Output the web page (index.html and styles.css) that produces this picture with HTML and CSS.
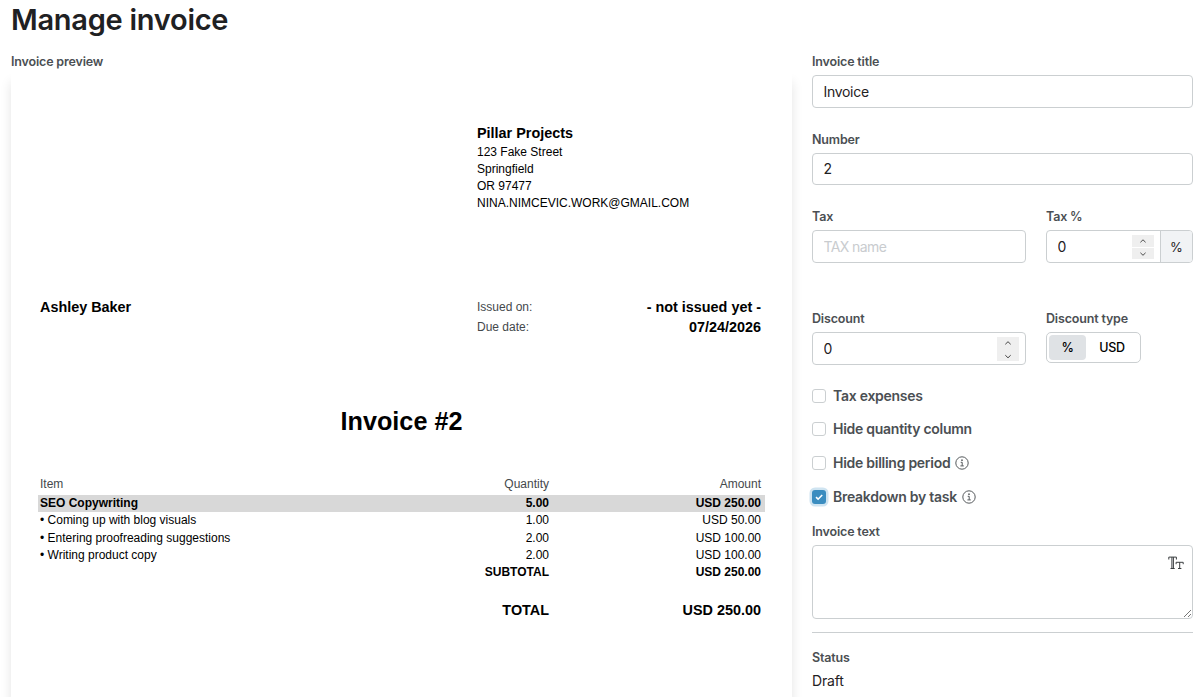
FILE: index.html
```html
<!DOCTYPE html>
<html lang="en">
<head>
<meta charset="utf-8">
<title>Manage invoice</title>
<link rel="stylesheet" href="styles.css">
</head>
<body>
<h1 class="page-title">Manage invoice</h1>
<main class="layout">
  <section class="preview">
    <div class="label">Invoice preview</div>
    <div class="sheet">
      <div class="sender">
        <div class="strong">Pillar Projects</div>
        <div>123 Fake Street</div>
        <div>Springfield</div>
        <div>OR 97477</div>
        <div class="mail">NINA.NIMCEVIC.WORK@GMAIL.COM</div>
      </div>
      <div class="parties">
        <div class="strong client">Ashley Baker</div>
        <dl class="dates">
          <dt>Issued on:</dt><dd>- not issued yet -</dd>
          <dt>Due date:</dt><dd>07/24/2026</dd>
        </dl>
      </div>
      <h2 class="invoice-heading">Invoice #2</h2>
      <div class="items">
        <div class="row head"><span>Item</span><span>Quantity</span><span>Amount</span></div>
        <div class="row group"><span>SEO Copywriting</span><span>5.00</span><span>USD 250.00</span></div>
        <div class="row first"><span>• Coming up with blog visuals</span><span>1.00</span><span>USD 50.00</span></div>
        <div class="row"><span>• Entering proofreading suggestions</span><span>2.00</span><span>USD 100.00</span></div>
        <div class="row"><span>• Writing product copy</span><span>2.00</span><span>USD 100.00</span></div>
        <div class="row subtotal"><span></span><span>SUBTOTAL</span><span>USD 250.00</span></div>
        <div class="row total"><span></span><span>TOTAL</span><span>USD 250.00</span></div>
      </div>
    </div>
  </section>

  <form class="settings">
    <div class="field title-field">
      <label class="label" for="title">Invoice title</label>
      <div class="control"><input id="title" class="input" type="text" value="Invoice"></div>
    </div>
    <div class="field number-field">
      <label class="label" for="number">Number</label>
      <div class="control"><input id="number" class="input" type="text" value="2"></div>
    </div>
    <div class="pair tax-pair">
      <div class="field">
        <label class="label" for="tax">Tax</label>
        <div class="control"><input id="tax" class="input" type="text" placeholder="TAX name"></div>
      </div>
      <div class="field">
        <label class="label" for="taxp">Tax %</label>
        <div class="control">
          <input id="taxp" class="input" type="text" value="0">
          <span class="spinner split">
            <svg viewBox="0 0 22 12"><path d="M8.3 7.6 11 5l2.7 2.6"/></svg>
            <svg viewBox="0 0 22 12"><path d="M8.3 5 11 7.6 13.7 5"/></svg>
          </span>
          <span class="addon">%</span>
        </div>
      </div>
    </div>
    <div class="pair discount-pair">
      <div class="field">
        <label class="label" for="discount">Discount</label>
        <div class="control">
          <input id="discount" class="input" type="text" value="0">
          <span class="spinner">
            <svg viewBox="0 0 22 12"><path d="M8.3 7.3 11 4.7l2.7 2.6"/></svg>
            <svg viewBox="0 0 22 12"><path d="M8.3 6.2 11 8.8l2.7-2.6"/></svg>
          </span>
        </div>
      </div>
      <div class="field">
        <span class="label">Discount type</span>
        <div class="segmented"><span class="segment active">%</span><span class="segment">USD</span></div>
      </div>
    </div>
    <div class="checks">
      <div class="check"><span class="box"></span><span>Tax expenses</span></div>
      <div class="check"><span class="box"></span><span>Hide quantity column</span></div>
      <div class="check"><span class="box"></span><span>Hide billing period</span>
        <svg class="info" viewBox="0 0 14 14"><circle cx="7" cy="7" r="6.2"/><path d="M5.7 6.3h1.5v3.5M5.4 9.9h3.4"/><circle class="dot" cx="7" cy="4.2" r=".85"/></svg></div>
      <div class="check"><span class="box checked"><svg viewBox="0 0 14 14"><path d="m4 7.2 2.1 2L10.2 5"/></svg></span><span>Breakdown by task</span>
        <svg class="info" viewBox="0 0 14 14"><circle cx="7" cy="7" r="6.2"/><path d="M5.7 6.3h1.5v3.5M5.4 9.9h3.4"/><circle class="dot" cx="7" cy="4.2" r=".85"/></svg></div>
    </div>
    <div class="field text-field">
      <span class="label">Invoice text</span>
      <div class="textarea">
        <svg class="type-icon" viewBox="0 0 16 14"><path d="M.8 3.5V1.1h7.6v2.4M3.9 1.1v11.3M5.4 1.1v11.3M2.5 12.5h4.2M8.1 8.2V6.3h7.1v1.9M11.7 6.3v6.1M10 12.5h3.4"/></svg>
        <svg class="grip" viewBox="0 0 9 9"><path d="M1 8 8 1M5 8l3-3"/></svg>
      </div>
    </div>
    <hr class="rule">
    <div class="label">Status</div>
    <div class="status">Draft</div>
  </form>
</main>
</body>
</html>
```
FILE: styles.css
```css
* { box-sizing: border-box; }
html, body { height: 100%; }
body {
  margin: 0;
  overflow: hidden;
  background: #fff;
  font-family: Inter, "Liberation Sans", sans-serif;
  font-size: 14px;
  color: #1f2123;
}
.page-title {
  margin: 0;
  height: 52px;
  padding: 0 0 0 11px;
  font-size: 29px;
  line-height: 39px;
  font-weight: 600;
  letter-spacing: -.27px;
}
.layout {
  display: grid;
  grid-template-columns: 781px 381px;
  gap: 20px;
  height: 645px;
  padding-left: 11px;
}
.preview { display: flex; flex-direction: column; }
.label {
  display: block;
  height: 20px;
  line-height: 20px;
  font-size: 12.5px;
  font-weight: 600;
  letter-spacing: -.17px;
  color: #4b4f53;
}

/* Invoice sheet */
.sheet {
  flex: 1;
  padding: 52px 27px 0;
  background: #fff;
  box-shadow: 0 10px 11px rgba(0, 0, 0, .11);
  font-family: "Liberation Sans", Arial, sans-serif;
  font-size: 12px;
  line-height: 17px;
  color: #000;
}
.strong { font-size: 14.4px; line-height: 19px; font-weight: 700; }
.sender { margin-left: 439px; height: 174px; }
.sender .strong { margin-bottom: 1px; }
.parties { display: grid; grid-template-columns: 437px 1fr; height: 107px; padding-left: 2px; }
.dates {
  display: grid;
  grid-template-columns: auto auto;
  grid-auto-rows: 20px;
  justify-content: space-between;
  margin: 0;
  padding-right: 4px;
  line-height: 19px;
}
.dates dt { color: #44484b; }
.dates dd { margin: 0; font-size: 14.4px; font-weight: 700; text-align: right; }
.invoice-heading {
  height: 71px;
  margin: 0;
  text-align: center;
  font-size: 25.2px;
  line-height: 32px;
  font-weight: 700;
}
.row {
  display: grid;
  grid-template-columns: 310px 199px 1fr;
  height: 17px;
  padding: 0 4px 0 2px;
}
.row span + span { text-align: right; }
.head { height: 19px; color: #44484b; }
.group { background: #d8d8d8; font-weight: 700; }
.first { height: 18px; }
.subtotal { font-weight: 700; }
.total { margin-top: 19px; height: 20px; font-size: 14.4px; line-height: 20px; font-weight: 700; }

/* Settings form */
.settings { display: flex; flex-direction: column; }
.title-field { height: 78px; }
.number-field { height: 77px; }
.pair { display: grid; grid-template-columns: 214px 147px; gap: 20px; }
.tax-pair { height: 102px; }
.discount-pair { height: 79px; }
.control {
  display: flex;
  height: 33px;
  margin-top: 3px;
  border: 1px solid #cbcfd1;
  border-radius: 4px;
  background: #fff;
  overflow: hidden;
}
.number-field .control { height: 32px; }
.input {
  flex: 1;
  min-width: 0;
  padding: 0 0 1px 10.5px;
  border: 0;
  outline: 0;
  background: transparent;
  font: 400 14px Inter, sans-serif;
  letter-spacing: -.3px;
  color: #1f2123;
}
.input::placeholder { color: #c9cccf; opacity: 1; letter-spacing: -.6px; }
.spinner {
  display: flex;
  flex-direction: column;
  width: 22px;
  height: 24px;
  margin: 4px 6px 0 0;
  background: #efefef;
}
.spinner svg { width: 22px; height: 12px; fill: none; stroke: #444; stroke-width: 1; }
.split { gap: 1px; background: none; }
.split svg { background: #efefef; }
.addon {
  width: 32px;
  border-left: 1px solid #cbcfd1;
  background: #f1f3f5;
  text-align: center;
  line-height: 32px;
  font-size: 13px;
}
.segmented {
  display: flex;
  width: 95px;
  height: 31px;
  margin-top: 3px;
  padding: 2px;
  border: 1px solid #cbcfd1;
  border-radius: 5px;
}
.segment {
  flex: 1;
  line-height: 26px;
  text-align: center;
  font-size: 12.5px;
  font-weight: 500;
  letter-spacing: -.2px;
  color: #000;
}
.active { flex: 0 0 37px; border-radius: 4px; background: #dfe2e5; }
.checks { display: grid; grid-template-rows: 33px 34px 34px 34px; height: 134px; }
.check {
  display: flex;
  align-items: flex-start;
  height: 17px;
  line-height: 16px;
  font-size: 14px;
  font-weight: 600;
  letter-spacing: -.27px;
  color: #4b4f53;
}
.box {
  flex: none;
  width: 14px;
  height: 14px;
  margin: 1px 7px 0 0;
  border: 1px solid #cbcfd1;
  border-radius: 3px;
}
.checked { border: 0; background: #3b8dc0; box-shadow: 0 0 0 2.5px #cfe4f1; }
.checked svg { display: block; fill: none; stroke: #fff; stroke-width: 1.6; }
.info { width: 14px; height: 14px; margin: 1px 0 0 5px; fill: none; stroke: #55595c; stroke-width: 1; }
.dot { fill: #55595c; stroke: none; }
.textarea {
  position: relative;
  height: 74px;
  margin-top: 3px;
  border: 1px solid #cbcfd1;
  border-radius: 4px;
}
.type-icon {
  position: absolute;
  top: 10px;
  right: 8.5px;
  width: 16px;
  height: 14px;
  fill: none;
  stroke: #3b3e40;
  stroke-width: 1;
}
.grip { position: absolute; right: 0; bottom: 0; width: 9px; height: 9px; fill: none; stroke: #666; stroke-width: .9; }
.rule { width: 100%; margin: 13px 0 15px; border: 0; border-top: 1px solid #cbcfd1; }
.status { height: 26px; line-height: 26px; font-size: 14px; letter-spacing: -.2px; }
```
